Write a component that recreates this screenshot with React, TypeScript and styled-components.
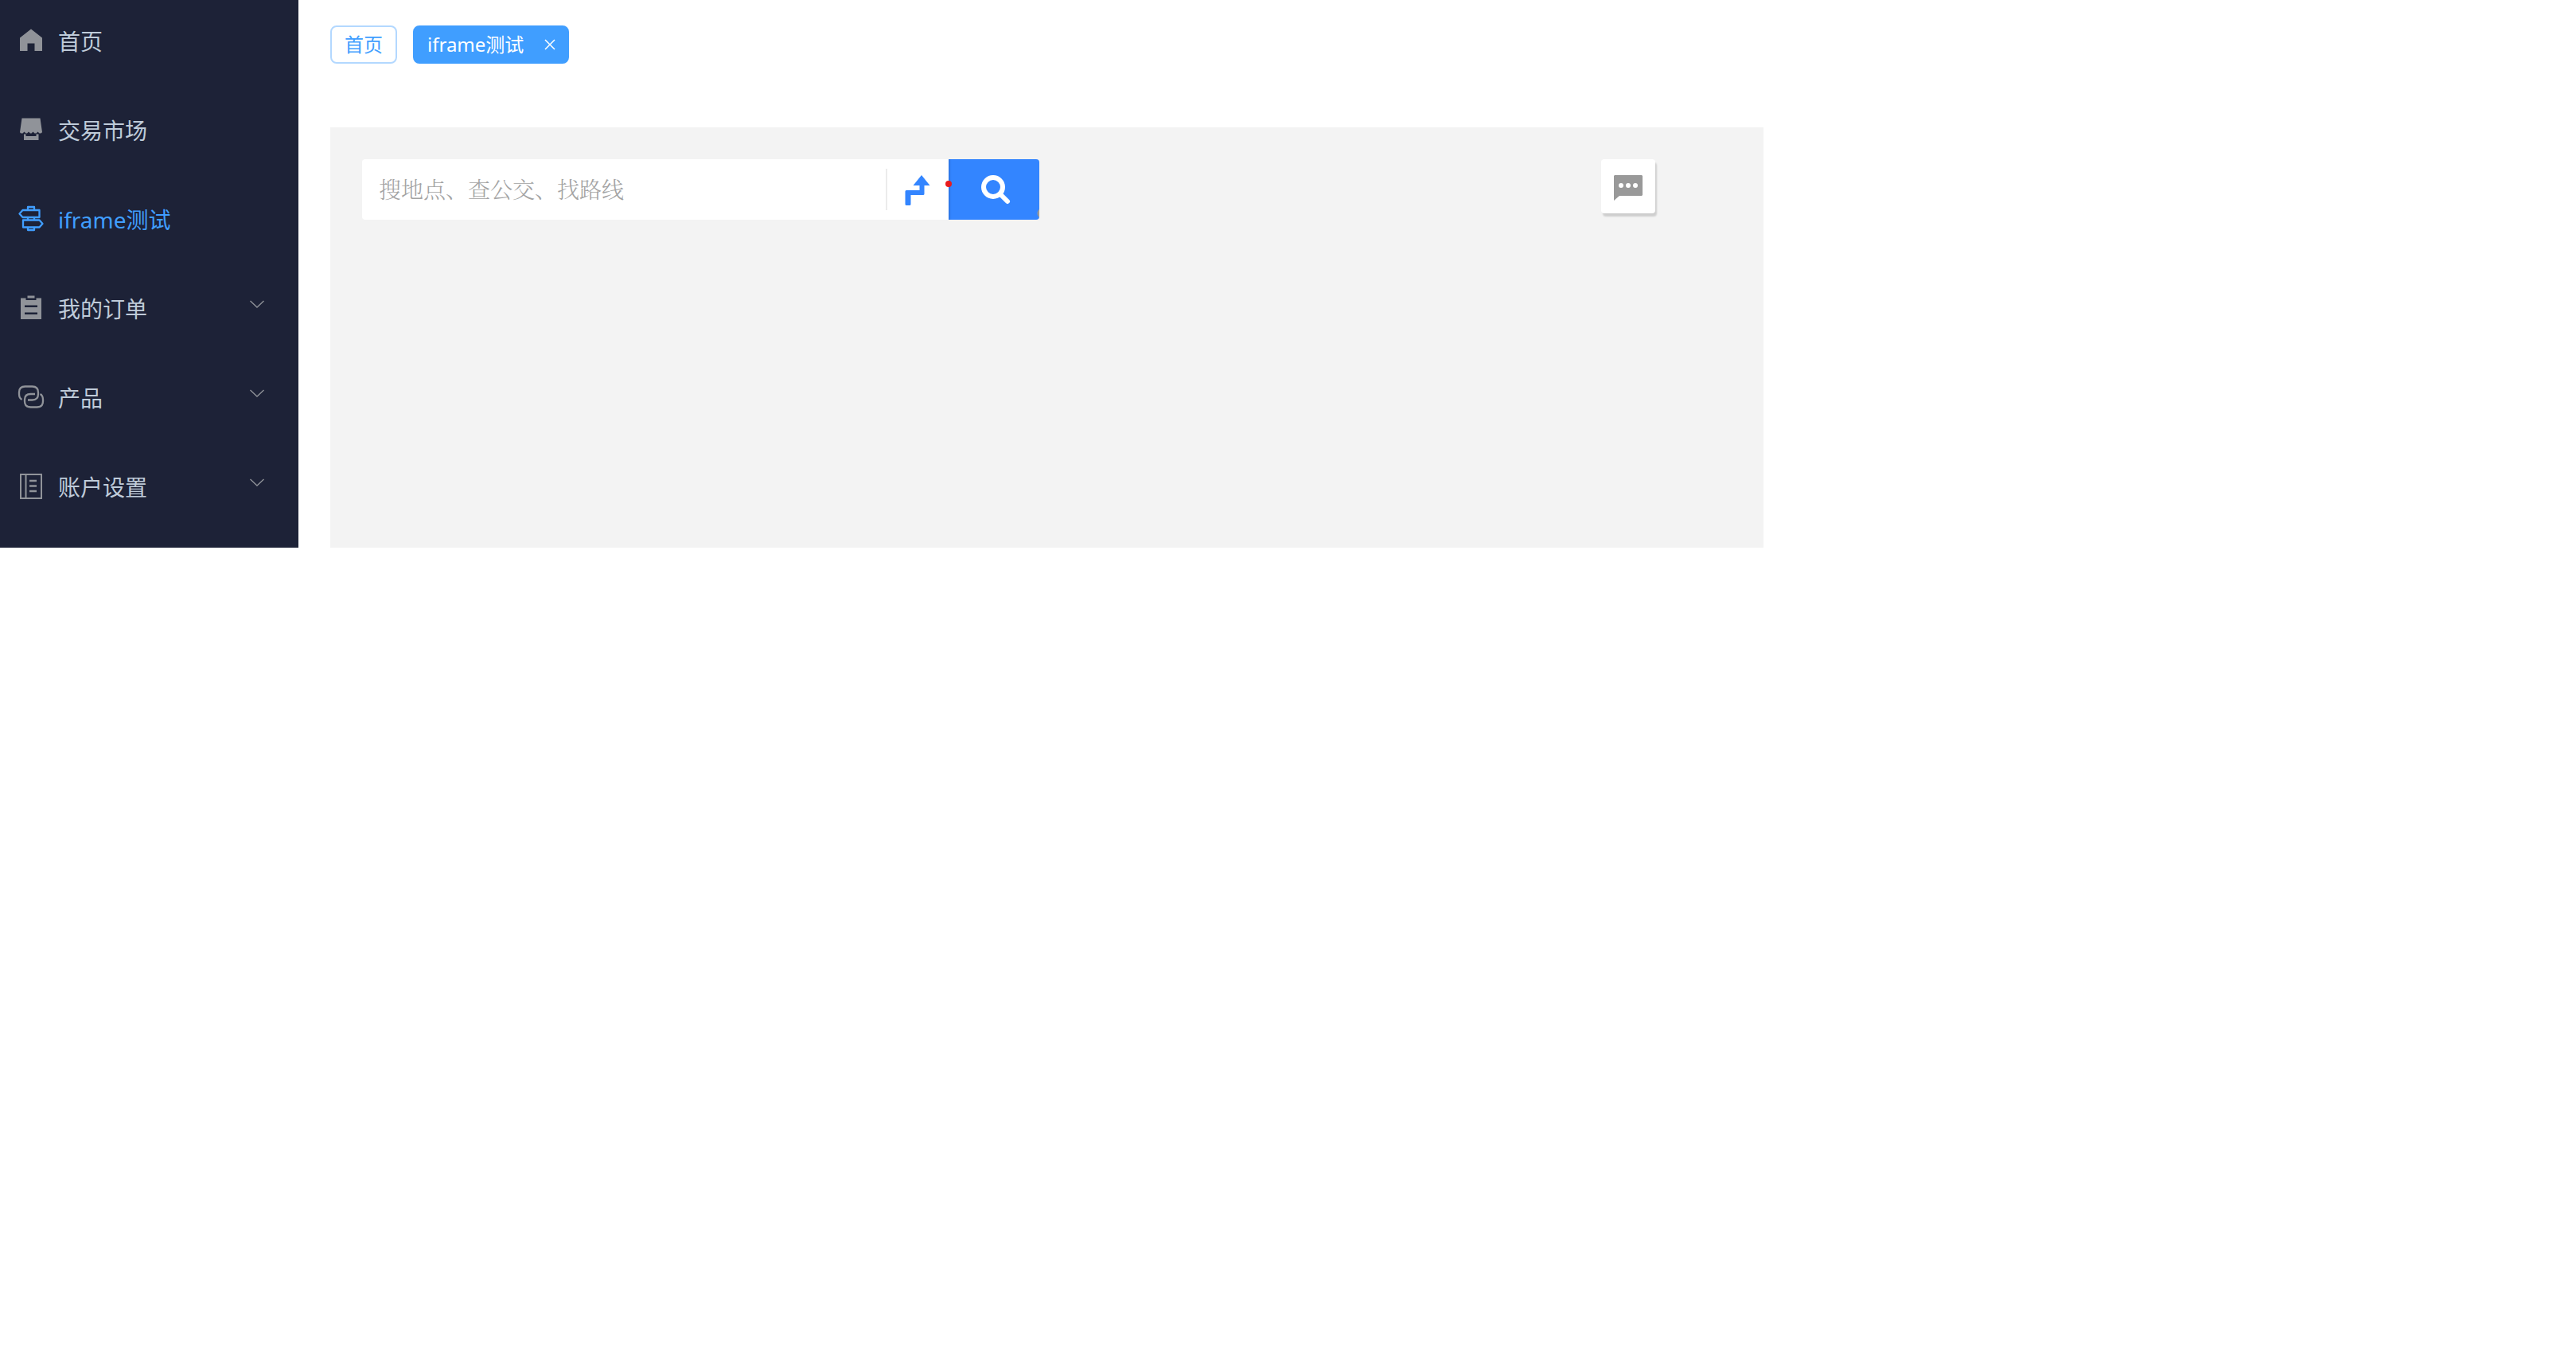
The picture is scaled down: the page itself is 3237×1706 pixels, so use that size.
import React from 'react';
import styled, { createGlobalStyle, css } from 'styled-components';

const GlobalStyle = createGlobalStyle`
  *, *::before, *::after { box-sizing: border-box; }
  body {
    margin: 0;
    background: #fff;
    font-family: "Noto Sans", "Noto Sans CJK SC", sans-serif;
  }
  button, input { font: inherit; }
`;

const Page = styled.div`
  display: flex;
  align-items: stretch;
  max-width: 2256px;
`;

const Sidebar = styled.nav`
  flex: 0 0 375px;
  padding: 24px 0 48px;
  background: #1d2237;
`;

const Menu = styled.ul`
  display: flex;
  flex-direction: column;
  gap: 56px;
  margin: 0;
  padding: 0;
  list-style: none;
`;

const entry = css<{ $active?: boolean }>`
  display: flex;
  align-items: center;
  width: 100%;
  height: 56px;
  padding: 0 40px 0 21px;
  border: 0;
  background: none;
  color: ${(p) => (p.$active ? '#409eff' : '#bfcbd9')};
  font-size: 28px;
  line-height: 54px;
  text-align: left;
  text-decoration: none;
  cursor: pointer;
`;

const MenuLink = styled.a<{ $active?: boolean }>`
  ${entry}
`;

const MenuButton = styled.button`
  ${entry}
`;

const MenuLabel = styled.span`
  flex: 1;
`;

const MenuIcon = styled.svg<{ $active?: boolean }>`
  flex: none;
  width: 36px;
  height: 36px;
  margin: 0 16px 5px 0;
  color: ${(p) => (p.$active ? '#409eff' : '#909399')};
`;

const Chevron = styled.svg`
  flex: none;
  width: 24px;
  height: 24px;
  margin-bottom: 12px;
  color: #909399;
`;

const Main = styled.main`
  flex: 1;
  min-width: 0;
  display: flex;
  flex-direction: column;
  gap: 80px;
  padding: 32px 40px 0;
`;

const Tabs = styled.div`
  display: flex;
  gap: 20px;
`;

const Tab = styled.div<{ $active?: boolean }>`
  display: flex;
  align-items: center;
  gap: 21px;
  height: 48px;
  padding: 0 16px;
  border: 2px solid ${(p) => (p.$active ? '#409eff' : '#b3d8ff')};
  border-radius: 8px;
  background: ${(p) => (p.$active ? '#409eff' : '#fff')};
  color: ${(p) => (p.$active ? '#fff' : '#409eff')};
  font-size: 24px;
  line-height: 44px;
`;

const TabLink = styled.a`
  color: inherit;
  text-decoration: none;
`;

const TabClose = styled.button`
  display: flex;
  align-items: center;
  justify-content: center;
  width: 24px;
  height: 24px;
  margin-right: -6px;
  padding: 0;
  border: 0;
  background: none;
  color: inherit;
  cursor: pointer;
`;

const MapPanel = styled.section`
  flex: 1;
  display: flex;
  align-items: flex-start;
  justify-content: space-between;
  min-height: 528px;
  padding: 40px 136px 40px 40px;
  background: #f3f3f3;
`;

const SearchBar = styled.form`
  display: flex;
  width: 851px;
  height: 76px;
  border-radius: 4px;
  background: #fff;
`;

const SearchInput = styled.input`
  flex: 1;
  min-width: 0;
  padding: 3px 20px 0 21px;
  border: 0;
  outline: 0;
  background: none;
  color: #333;
  font-family: "Liberation Serif", "Noto Serif CJK SC", "Noto Sans CJK SC", serif;
  font-size: 28px;
  font-weight: 300;
  &::placeholder { color: #a3a3a3; opacity: 1; }
`;

const RouteButton = styled.button`
  position: relative;
  display: flex;
  align-items: center;
  justify-content: center;
  width: 79px;
  padding: 2px 0 0 1px;
  border: 0;
  background: linear-gradient(#ebebeb, #ebebeb) 0 12px / 2px 52px no-repeat;
  color: #3385ff;
  cursor: pointer;
`;

const Dot = styled.span`
  position: absolute;
  top: 27px;
  right: -4px;
  z-index: 1;
  width: 8px;
  height: 8px;
  border-radius: 50%;
  background: #e81b1d;
`;

const SearchButton = styled.button`
  display: flex;
  align-items: center;
  justify-content: center;
  width: 114px;
  padding: 0 0 0 3px;
  border: 0;
  border-radius: 0 4px 4px 0;
  background: radial-gradient(circle at 118px 68px, #999 6px, transparent 7px) #3385ff;
  box-shadow: inset 3px 0 2px -1px #2e77e5;
  color: #fff;
  cursor: pointer;
`;

const MessageButton = styled.button`
  display: flex;
  align-items: center;
  justify-content: center;
  width: 68px;
  height: 68px;
  padding: 4px 0 0;
  border: 0;
  border-radius: 4px;
  background: #fff;
  box-shadow: 2px 4px 2px rgba(0, 0, 0, 0.15);
  color: #999;
  cursor: pointer;
`;

type IconName = 'home' | 'market' | 'guide' | 'order' | 'product' | 'account';

const shapes: Record<IconName, React.ReactNode> = {
  home: <path fill="currentColor" d="M18 4.500 32 15.500V32H22.500V22.500H13.500V32H4V15.500Z" />,
  market: (
    <>
      <path fill="currentColor" d="M6.500 4.500H29.500L32 22Q31 24 28.500 23.500L26.500 21.500 24.500 23.500H22.500L20.500 21.500 18.500 23.500H17L15 21.500 13 23.500H11.500L9.500 21.500 7.500 23.500Q4.500 24 4 22Z" />
      <path fill="currentColor" d="M9 24.500H11.500V27H24.500V24.500H27.500V32H9Z" />
    </>
  ),
  guide: (
    <g fill="none" stroke="currentColor" strokeWidth="2.300" strokeLinejoin="round">
      <path d="M14 8V4H22V8M14 17V20.500M22 17V20.500M14 29.500V33H22V29.500" />
      <path d="M7.500 8H28.500V17H7.500L3.500 12.500Z" />
      <path d="M28.500 20.500H8V29.500H28.500L32.500 25Z" />
    </g>
  ),
  order: (
    <>
      <path fill="currentColor" d="M13.500 3.500H22.500V6.500H13.500Z" />
      <path fill="currentColor" fillRule="evenodd" d="M5 6.500H11.500V9H24.500V6.500H31V33H5ZM10 15.500V18H26V15.500ZM10 24.500V27H26V24.500Z" />
    </>
  ),
  product: (
    <g fill="none" stroke="currentColor" strokeWidth="2.300">
      <path d="M6.500 22Q3 20 3 15V13Q3 5.500 10.500 5.500H19.500Q27 5.500 27 13V15Q27 22.500 19.500 22.500H14" />
      <path d="M29.500 15Q33 17 33 22V24Q33 31.500 25.500 31.500H17.500Q10 31.500 10 24V22Q10 15 17.500 15H23" />
    </g>
  ),
  account: (
    <g fill="none" stroke="currentColor" strokeWidth="2">
      <path d="M5 4H31V34H5ZM11.500 4V34" />
      <path d="M16 12H25M16 18.500H25M16 25H25" strokeWidth="2.500" />
    </g>
  ),
};

const items: { icon: IconName; label: string; active?: boolean; group?: boolean }[] = [
  { icon: 'home', label: '首页' },
  { icon: 'market', label: '交易市场' },
  { icon: 'guide', label: 'iframe测试', active: true },
  { icon: 'order', label: '我的订单', group: true },
  { icon: 'product', label: '产品', group: true },
  { icon: 'account', label: '账户设置', group: true },
];

export default function App() {
  return (
    <>
      <GlobalStyle />
      <Page>
        <Sidebar>
          <Menu>
            {items.map(({ icon, label, active, group }) => {
              const glyph = (
                <MenuIcon viewBox="0 0 36 36" $active={active} aria-hidden="true">
                  {shapes[icon]}
                </MenuIcon>
              );
              return (
                <li key={label}>
                  {group ? (
                    <MenuButton type="button" aria-expanded={false}>
                      {glyph}
                      <MenuLabel>{label}</MenuLabel>
                      <Chevron viewBox="0 0 24 24" aria-hidden="true">
                        <path d="M3.500 8 12 16 20.500 8" fill="none" stroke="currentColor" strokeWidth="1.300" />
                      </Chevron>
                    </MenuButton>
                  ) : (
                    <MenuLink href="#" $active={active}>
                      {glyph}
                      <MenuLabel>{label}</MenuLabel>
                    </MenuLink>
                  )}
                </li>
              );
            })}
          </Menu>
        </Sidebar>
        <Main>
          <Tabs>
            <Tab>
              <TabLink href="#">首页</TabLink>
            </Tab>
            <Tab $active>
              <TabLink href="#">iframe测试</TabLink>
              <TabClose type="button" aria-label="关闭">
                <svg width="14" height="14" viewBox="0 0 14 14" aria-hidden="true">
                  <path d="M1 1 13 13M13 1 1 13" stroke="currentColor" strokeWidth="1.500" />
                </svg>
              </TabClose>
            </Tab>
          </Tabs>
          <MapPanel>
            <SearchBar>
              <SearchInput type="text" aria-label="搜索" placeholder="搜地点、查公交、找路线" />
              <RouteButton type="button" aria-label="路线">
                <svg width="32" height="38" viewBox="0 0 32 38" aria-hidden="true">
                  <path
                    fill="currentColor"
                    d="M21 0 31.500 13H24.500V23.500Q24.500 25 23 25H7.500V36.500Q7.500 38 6 38H2Q.5 38 .5 36.500V20.500Q.5 19 2 19H18.500V13H10.500Z"
                  />
                </svg>
                <Dot />
              </RouteButton>
              <SearchButton type="submit" aria-label="搜索">
                <svg width="38" height="38" viewBox="0 0 38 38" fill="none" stroke="currentColor" aria-hidden="true">
                  <circle cx="16" cy="16" r="12" strokeWidth="6" />
                  <path d="M25 25 34 34" strokeWidth="6" strokeLinecap="round" />
                </svg>
              </SearchButton>
            </SearchBar>
            <MessageButton type="button" aria-label="消息">
              <svg width="36" height="32" viewBox="0 0 36 32" aria-hidden="true">
                <path fill="currentColor" d="M1 0H35L36 1V25L35 26H7L0 32V1Z" />
                <g fill="#fff">
                  <circle cx="9" cy="13" r="3" />
                  <circle cx="18" cy="13" r="3" />
                  <circle cx="27" cy="13" r="3" />
                </g>
              </svg>
            </MessageButton>
          </MapPanel>
        </Main>
      </Page>
    </>
  );
}
